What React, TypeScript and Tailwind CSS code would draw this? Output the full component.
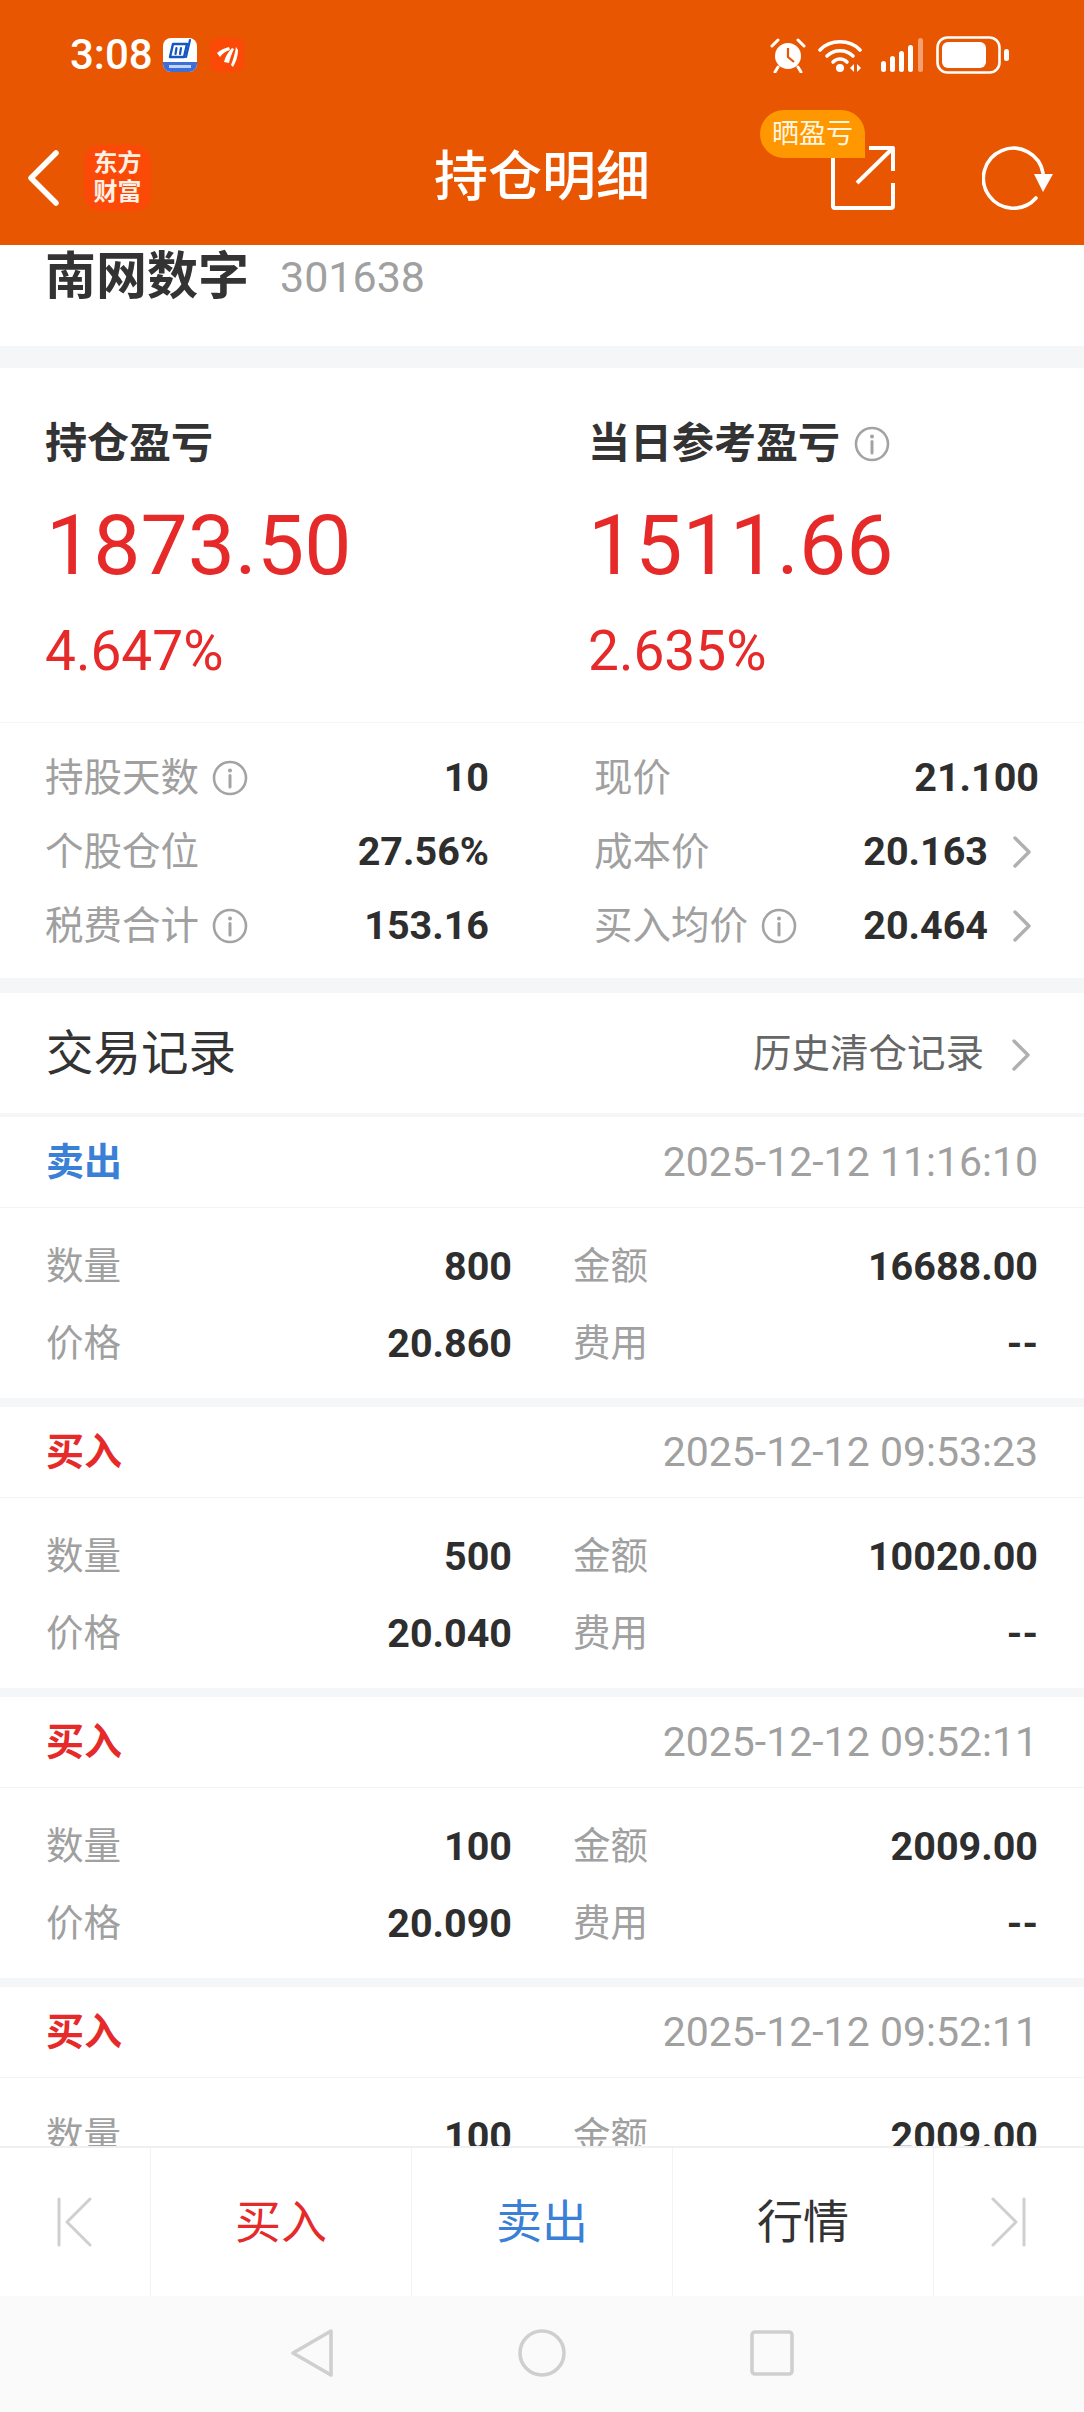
import React from "react";

const FONT = "font-['Roboto','Noto_Sans_CJK_SC',sans-serif]";

function Info({ size = 36 }: { size?: number }) {
  return (
    <svg width={size} height={size} viewBox="0 0 36 36" className="shrink-0">
      <circle cx="18" cy="18" r="16" fill="none" stroke="#a3a3a3" strokeWidth="2.6" />
      <circle cx="18" cy="10.5" r="2" fill="#a3a3a3" />
      <path d="M18 15.5V27" stroke="#a3a3a3" strokeWidth="3" strokeLinecap="round" />
    </svg>
  );
}

function Chevron() {
  return (
    <svg width="20" height="34" viewBox="0 0 20 34" className="shrink-0">
      <path d="M3 3L17 17L3 31" fill="none" stroke="#b0b0b0" strokeWidth="3.4" strokeLinecap="round" strokeLinejoin="round" />
    </svg>
  );
}

function StatCell({ label, value, info }: { label: string; value: string; info?: boolean }) {
  return (
    <div className="flex items-center justify-between h-[74px]">
      <div className="flex items-center gap-[13px]">
        <span className="text-[38.5px] leading-none text-[#a0a0a0]">{label}</span>
        {info && <Info />}
      </div>
      <span className="text-[39.5px] leading-none font-bold text-[#2e2e2e]">{value}</span>
    </div>
  );
}

function StatCellRight({ label, value, info, chevron }: { label: string; value: string; info?: boolean; chevron?: boolean }) {
  return (
    <div className="flex items-center h-[74px]">
      <div className="flex items-center gap-[13px]">
        <span className="text-[38.5px] leading-none text-[#a0a0a0]">{label}</span>
        {info && <Info />}
      </div>
      <span className={chevron ? "ml-auto text-[39.5px] leading-none font-bold text-[#2e2e2e] mr-[24px]" : "ml-auto text-[39.5px] leading-none font-bold text-[#2e2e2e]"}>{value}</span>
      {chevron && <span className="mr-[7px] flex"><Chevron /></span>}
    </div>
  );
}

function TradeRow({ l1, v1, l2, v2 }: { l1: string; v1: string; l2: string; v2: string }) {
  return (
    <div className="flex items-center h-[77px]">
      <div className="w-[466px] flex items-center justify-between">
        <span className="text-[37.5px] leading-none text-[#a0a0a0]">{l1}</span>
        <span className="text-[39.5px] leading-none font-bold text-[#2e2e2e]">{v1}</span>
      </div>
      <div className="flex-1 pl-[61px] flex items-center justify-between">
        <span className="text-[37.5px] leading-none text-[#a0a0a0]">{l2}</span>
        <span className="text-[39.5px] leading-none font-bold text-[#2e2e2e]">{v2}</span>
      </div>
    </div>
  );
}

function Trade({ kind, time, qty, amount, price }: { kind: "买入" | "卖出"; time: string; qty: string; amount: string; price: string }) {
  return (
    <div className="bg-white border-b-[9px] border-[#f5f6f8]">
      <div className="h-[91px] border-b border-[#f3f3f3] px-[46px] flex items-center justify-between">
        <span className={kind === "买入" ? "text-[38px] leading-none font-bold text-[#e62a2a]" : "text-[38px] leading-none font-bold text-[#3a80d6]"}>{kind}</span>
        <span className="text-[41px] leading-none text-[#a0a0a0]">{time}</span>
      </div>
      <div className="h-[190px] px-[46px] pt-[20px]">
        <TradeRow l1="数量" v1={qty} l2="金额" v2={amount} />
        <TradeRow l1="价格" v1={price} l2="费用" v2="--" />
      </div>
    </div>
  );
}

function AppIconBlue() {
  return (
    <svg width="34" height="34" viewBox="0 0 34 34">
      <rect width="34" height="34" rx="8" fill="#fff" />
      <path d="M0 24H34V26a8 8 0 0 1-8 8H8a8 8 0 0 1-8-8Z" fill="#3d6fd8" />
      <path d="M10 6H24L21 19H7Z" fill="none" stroke="#1557c0" strokeWidth="2.4" strokeLinejoin="round" />
      <path d="M13.500 10L12.500 16M18 10L17 16M27 2L23 19" fill="none" stroke="#1557c0" strokeWidth="2.2" strokeLinecap="round" />
      <rect x="6" y="27" width="22" height="3" fill="#dbe6ff" opacity="0.85" />
    </svg>
  );
}

function AppIconRed() {
  return (
    <svg width="34" height="34" viewBox="0 0 34 34">
      <rect width="34" height="34" rx="8" fill="#fb4a08" />
      <path d="M7 15C10 12 15 10 19 9L20 12C16 13 12 16 10 19Z" fill="#fff" />
      <path d="M14 24C15 19 18 14 22 10L24 11C22 15 20 20 19 25Z" fill="#fff" />
      <path d="M21 27C23 22 25 15 26 9L28 12C28 18 26 24 23 29Z" fill="#fff" />
    </svg>
  );
}

function StatusRight() {
  return (
    <div className="flex items-center">
      <svg width="36" height="36" viewBox="0 0 36 36" className="mr-[12px]">
        <circle cx="18" cy="19" r="13" fill="#fff" />
        <path d="M18 11V20L24 25" fill="none" stroke="#e85602" strokeWidth="2.2" />
        <path d="M2 9L8 3M34 9L28 3M8 30L5 35M28 30L31 35" stroke="#fff" strokeWidth="3" strokeLinecap="round" />
      </svg>
      <svg width="45" height="36" viewBox="0 0 45 36" className="mr-[18px]">
        <path d="M2 13C12 2 32 2 42 13" fill="none" stroke="#fff" strokeWidth="3.6" strokeLinecap="round" />
        <path d="M9 19C16 12 28 12 35 19" fill="none" stroke="#fff" strokeWidth="3.6" strokeLinecap="round" />
        <path d="M15 25C19 21 25 21 29 25" fill="none" stroke="#fff" strokeWidth="3.6" strokeLinecap="round" />
        <circle cx="22" cy="31" r="4" fill="#fff" />
        <path d="M32 31L36 27V35ZM43 31L39 27V35Z" fill="#fff" />
      </svg>
      <svg width="44" height="36" viewBox="0 0 44 36" className="mr-[11px]">
        <rect x="0" y="24" width="5" height="11" rx="2.500" fill="#fff" />
        <rect x="9" y="19" width="5" height="16" rx="2.500" fill="#fff" />
        <rect x="18" y="14" width="5" height="21" rx="2.500" fill="#fff" />
        <rect x="27" y="8" width="5" height="27" rx="2.500" fill="#fff" />
        <rect x="37" y="1" width="5" height="34" rx="2.500" fill="#f6a070" />
      </svg>
      <svg width="74" height="38" viewBox="0 0 74 38">
        <rect x="1.500" y="1.500" width="62" height="35" rx="10" fill="none" stroke="#fff" strokeWidth="2.6" />
        <rect x="6" y="6" width="44" height="26" rx="6" fill="#fff" />
        <rect x="68" y="13" width="5" height="12" rx="2.500" fill="#fff" />
      </svg>
    </div>
  );
}

export default function App() {
  return (
    <div className={`${FONT} w-[1084px] h-[2412px] flex flex-col overflow-hidden bg-white`}>
      <header className="bg-[#e85602] h-[245px] shrink-0 flex flex-col text-white">
        <div className="h-[110px] pt-[36px] pl-[70px] pr-[74px] flex items-start justify-between">
          <div className="flex items-center h-[38px]">
            <span className="text-[42px] leading-none font-medium w-[93px]">3:08</span>
            <AppIconBlue />
            <span className="ml-[13px] flex"><AppIconRed /></span>
          </div>
          <StatusRight />
        </div>
        <div className="relative grid grid-cols-[1fr_auto_1fr] items-center h-[135px]">
          <div className="flex items-center pl-[26px] gap-[24px]">
            <svg width="34" height="58" viewBox="0 0 34 58">
              <path d="M30 4L5 29L30 54" fill="none" stroke="#fff" strokeWidth="5.5" strokeLinecap="round" strokeLinejoin="round" />
            </svg>
            <div className="w-[67px] h-[66px] rounded-[16px] bg-[#fb4a08] flex flex-col items-center justify-center text-[24px] leading-[29px] font-bold text-[#fff0e6]">
              <span>东方</span>
              <span>财富</span>
            </div>
          </div>
          <h1 className="text-[54px] leading-none font-medium">持仓明细</h1>
          <div className="flex items-center justify-end pr-[30px] gap-[87px]">
            <svg width="64" height="66" viewBox="0 0 64 66">
              <path d="M38 3H62V26M62 38V61a2 2 0 0 1-2 2H4a2 2 0 0 1-2-2V10" fill="none" stroke="#fff" strokeWidth="4" strokeLinejoin="round" />
              <path d="M62 3L26 38" fill="none" stroke="#fff" strokeWidth="4" />
            </svg>
            <svg width="72" height="66" viewBox="0 0 72 66">
              <path d="M61 28A30 30 0 1 0 54 53" fill="none" stroke="#fff" strokeWidth="3.6" strokeLinecap="round" />
              <path d="M52 29H71L61 47Z" fill="#fff" />
            </svg>
          </div>
          <div className="absolute left-[760px] top-0 w-[105px] h-[48px] rounded-t-[24px] rounded-bl-[24px] bg-[#ff9800] flex items-center justify-center text-[27px] leading-none text-[#fff6e0]">
            晒盈亏
          </div>
        </div>
      </header>

      <main className="flex-1 min-h-0 overflow-hidden">
        <section className="h-[93px] pt-[8px] pl-[45px] pr-[46px] flex items-start gap-[31px] border-b-[22px] border-[#f5f6f8] box-content">
          <span className="text-[51px] leading-[48px] font-bold text-[#333333]">南网数字</span>
          <span className="text-[43px] leading-[48px] text-[#a0a0a0]">301638</span>
        </section>

        <section className="grid grid-cols-[543px_1fr] pl-[45px] h-[355px] pt-[56px] border-b border-[#f5f5f5] box-border">
          <div>
            <div className="h-[40px] flex items-center text-[42px] leading-none font-bold text-[#333333]">持仓盈亏</div>
            <div className="mt-[40px] text-[84px] leading-[84px] text-[#e62a2a] pl-[1px]">1873.50</div>
            <div className="mt-[35px] text-[55px] leading-[56px] text-[#e62a2a]">4.647%</div>
          </div>
          <div>
            <div className="h-[40px] flex items-center gap-[14px] text-[42px] leading-none font-bold text-[#333333]">
              当日参考盈亏
              <Info />
            </div>
            <div className="mt-[40px] text-[84px] leading-[84px] text-[#e62a2a]">1511.66</div>
            <div className="mt-[35px] text-[55px] leading-[56px] text-[#e62a2a]">2.635%</div>
          </div>
        </section>

        <section className="h-[270px] pt-[18px] px-[45px] border-b-[15px] border-[#f5f6f8] grid grid-cols-[444px_1fr] gap-x-[105px] content-start">
          <StatCell label="持股天数" value="10" info />
          <StatCellRight label="现价" value="21.100" />
          <StatCell label="个股仓位" value="27.56%" />
          <StatCellRight label="成本价" value="20.163" chevron />
          <StatCell label="税费合计" value="153.16" info />
          <StatCellRight label="买入均价" value="20.464" info chevron />
        </section>

        <section className="h-[124px] px-[46px] pt-[3px] flex items-center justify-between border-b-[4px] border-[#f5f6f8]">
          <h2 className="text-[47.5px] leading-none font-normal text-[#333333]">交易记录</h2>
          <div className="flex items-center gap-[27px] pr-[7px]">
            <span className="text-[38.5px] leading-none text-[#666666]">历史清仓记录</span>
            <Chevron />
          </div>
        </section>

        <Trade kind="卖出" time="2025-12-12 11:16:10" qty="800" amount="16688.00" price="20.860" />
        <Trade kind="买入" time="2025-12-12 09:53:23" qty="500" amount="10020.00" price="20.040" />
        <Trade kind="买入" time="2025-12-12 09:52:11" qty="100" amount="2009.00" price="20.090" />
        <Trade kind="买入" time="2025-12-12 09:52:11" qty="100" amount="2009.00" price="20.090" />
      </main>

      <nav className="h-[150px] shrink-0 bg-white border-t-2 border-[#f0f0f0] grid grid-cols-[151px_261px_261px_261px_1fr] z-10">
        <div className="flex items-center justify-center border-r border-[#f3f3f3]">
          <svg width="36" height="50" viewBox="0 0 36 50">
            <path d="M2 2V48M33 2L10 25L33 48" fill="none" stroke="#cfcfcf" strokeWidth="3" strokeLinecap="round" strokeLinejoin="round" />
          </svg>
        </div>
        <div className="flex items-center justify-center border-r border-[#f3f3f3] text-[46px] leading-none text-[#e62a2a]">买入</div>
        <div className="flex items-center justify-center border-r border-[#f3f3f3] text-[46px] leading-none text-[#3a80d6]">卖出</div>
        <div className="flex items-center justify-center border-r border-[#f3f3f3] text-[46px] leading-none text-[#333333]">行情</div>
        <div className="flex items-center justify-center">
          <svg width="36" height="50" viewBox="0 0 36 50">
            <path d="M33 2V48M2 2L25 25L2 48" fill="none" stroke="#cfcfcf" strokeWidth="3" strokeLinecap="round" strokeLinejoin="round" />
          </svg>
        </div>
      </nav>

      <div className="h-[116px] shrink-0 bg-[#fafafa] flex items-start justify-center pt-[32px] gap-[184px]">
        <svg width="44" height="50" viewBox="0 0 44 50">
          <path d="M41 3L3 25L41 47Z" fill="none" stroke="#cfcfcf" strokeWidth="3.6" strokeLinejoin="round" />
        </svg>
        <svg width="48" height="50" viewBox="0 0 48 50">
          <circle cx="24" cy="25" r="22" fill="none" stroke="#cfcfcf" strokeWidth="3.6" />
        </svg>
        <svg width="44" height="50" viewBox="0 0 44 50">
          <rect x="2" y="4" width="40" height="42" rx="3" fill="none" stroke="#cfcfcf" strokeWidth="3.6" />
        </svg>
      </div>
    </div>
  );
}
